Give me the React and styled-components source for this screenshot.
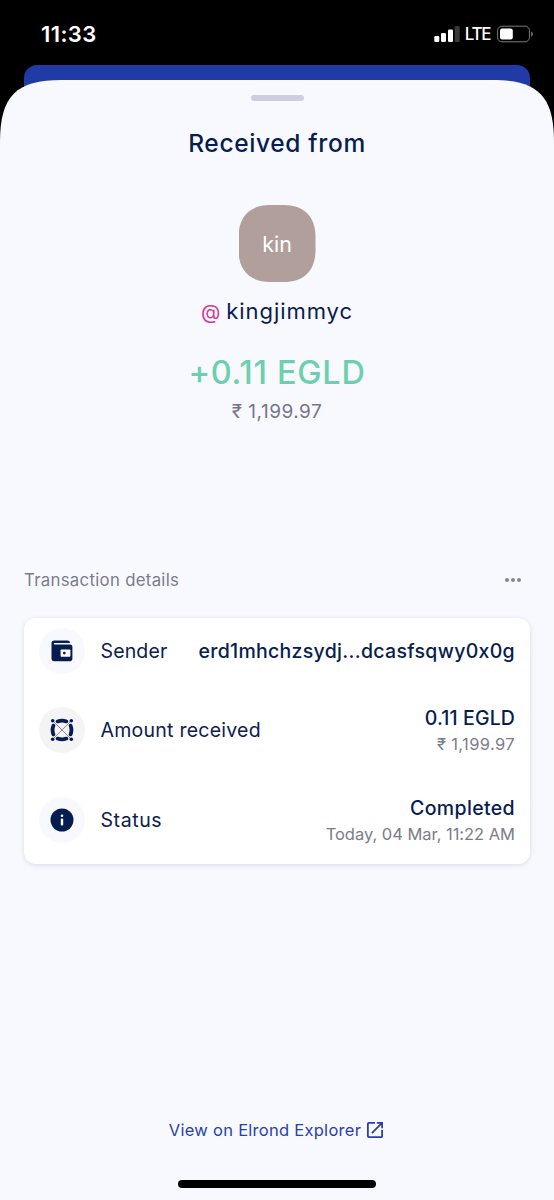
import React from 'react'
import styled, { createGlobalStyle } from "styled-components";

const GlobalStyle = createGlobalStyle`
    * {
        box-sizing: border-box;
    }
    body {
        margin: 0;
        background: #000000;
        font-family: 'Inter', 'Liberation Sans', sans-serif;
    }
`;

const details = [
    {
        icon: <WalletIcon />,
        label: "Sender",
        labelSpacing: 0.15,
        value: "erd1mhchzsydj...dcasfsqwy0x0g",
        height: 66,
        spacing: 0.3
    },
    {
        icon: <ElrondIcon />,
        circle: "#f4f4f5",
        label: "Amount received",
        labelSpacing: 0.25,
        value: "0.11 EGLD",
        note: "₹ 1,199.97",
        noteSpacing: 0.38,
        height: 91,
        spacing: 0.12
    },
    {
        icon: <InfoIcon />,
        label: "Status",
        labelSpacing: 0.6,
        value: "Completed",
        note: "Today, 04 Mar, 11:22 AM",
        noteSpacing: -0.03,
        height: 89,
        spacing: 0.36
    }
];

export default function App() {
    return (
        <>
            <GlobalStyle />
            <Screen>
                <StatusBar>
                    <Time>11:33</Time>
                    <SignalIcon />
                    <Network>LTE</Network>
                    <BatteryIcon />
                </StatusBar>
                <BackCard />
                <Sheet>
                    <Handle />
                    <Title>Received from</Title>
                    <Avatar>kin</Avatar>
                    <Username><At>@</At>kingjimmyc</Username>
                    <Amount>+0.11 EGLD</Amount>
                    <Fiat>₹ 1,199.97</Fiat>
                    <SectionHeader>
                        <SectionTitle>Transaction details</SectionTitle>
                        <More><Dot /><Dot /><Dot /></More>
                    </SectionHeader>
                    <Card>
                        {details.map((item) => (
                            <Row key={item.label} $height={item.height}>
                                <IconCircle $color={item.circle}>{item.icon}</IconCircle>
                                <Label $spacing={item.labelSpacing}>{item.label}</Label>
                                <Values $twoLines={!!item.note}>
                                    <Value $spacing={item.spacing}>{item.value}</Value>
                                    {item.note && <Note $spacing={item.noteSpacing}>{item.note}</Note>}
                                </Values>
                            </Row>
                        ))}
                    </Card>
                    <ExplorerLink>
                        View on Elrond Explorer
                        <OpenIcon />
                    </ExplorerLink>
                    <HomeIndicator />
                </Sheet>
            </Screen>
        </>
    )
}

function SignalIcon() {
    return (
        <svg width="26" height="16" viewBox="0 0 26 16" fill="#fff">
            <rect x="0.3" y="10" width="5" height="6" rx="1.3" />
            <rect x="7" y="7" width="5" height="9" rx="1.3" />
            <rect x="14" y="3.5" width="5" height="12.5" rx="1.3" />
            <rect x="20.7" y="0" width="5" height="16" rx="1.3" fill="#3a3a3a" />
        </svg>
    )
}

function BatteryIcon() {
    return (
        <svg width="37" height="18" viewBox="0 0 37 18">
            <rect x="0.6" y="1.2" width="31.8" height="15.6" rx="4.2" fill="none" stroke="#7c7c7c" strokeWidth="1" />
            <rect x="3" y="3.6" width="12.8" height="10.8" rx="2.2" fill="#fff" />
            <path d="M34.2 6.4 C36.3 7.4 36.3 10.6 34.2 11.6 Z" fill="#7c7c7c" />
        </svg>
    )
}

function WalletIcon() {
    return (
        <svg width="22" height="22" viewBox="0 0 22 22">
            <path d="M3.2 0.6 H16.5 C18.2 0.6 19 1.6 19 2.9 H3.4 C2.7 2.9 2.7 4.4 3.4 4.4 H19 C20.4 4.4 21.4 5.3 21.4 6.7 V18.8 C21.4 20.3 20.4 21.2 19 21.2 H3.2 C1.5 21.2 0.5 20.2 0.5 18.6 V3.2 C0.5 1.6 1.5 0.6 3.2 0.6 Z" fill="#071d4f" />
            <rect x="9.6" y="9.4" width="9.8" height="7.4" rx="0.8" fill="#fff" />
            <circle cx="13.3" cy="13.1" r="1.4" fill="#071d4f" />
        </svg>
    )
}

function ElrondIcon() {
    return (
        <svg width="24" height="24" viewBox="0 0 24 24" fill="none">
            <path d="M3.4 3.4 L20.6 20.6 M20.6 3.4 L3.4 20.6" stroke="#45454d" strokeWidth="0.6" />
            <g stroke="#071d4f" strokeWidth="3.8" strokeLinecap="round">
                <path d="M7.6 3.4 Q12 1.7 16.4 3.4" />
                <path d="M7.6 20.6 Q12 22.3 16.4 20.6" />
                <path d="M3.4 7.6 Q1.7 12 3.4 16.4" />
                <path d="M20.6 7.6 Q22.3 12 20.6 16.4" />
            </g>
            <g fill="#071d4f">
                <circle cx="2.7" cy="2.7" r="1.8" />
                <circle cx="21.3" cy="2.7" r="1.8" />
                <circle cx="2.7" cy="21.3" r="1.8" />
                <circle cx="21.3" cy="21.3" r="1.8" />
            </g>
        </svg>
    )
}

function InfoIcon() {
    return (
        <svg width="24" height="24" viewBox="0 0 24 24">
            <circle cx="12" cy="12" r="11.5" fill="#071d4f" />
            <circle cx="12" cy="7.8" r="1.3" fill="#fff" />
            <rect x="10.8" y="10.4" width="2.4" height="7.2" rx="1" fill="#fff" />
        </svg>
    )
}

function OpenIcon() {
    return (
        <svg width="16" height="16" viewBox="3 3 18 18" fill="#2a3fae">
            <path d="M19 19H5V5h7V3H5a2 2 0 0 0-2 2v14a2 2 0 0 0 2 2h14c1.1 0 2-.9 2-2v-7h-2v7zM14 3v2h3.59l-9.83 9.83 1.41 1.41L19 6.41V10h2V3h-7z" />
        </svg>
    )
}

const Screen = styled.div`
    width: 554px;
    height: 1200px;
    display: flex;
    flex-direction: column;
    background: #000000;
    overflow: hidden;
`;

const StatusBar = styled.div`
    height: 65px;
    padding: 3px 20px 0 41px;
    display: flex;
    align-items: center;
    flex-shrink: 0;
    color: #ffffff;
`;

const Time = styled.span`
    flex: 1;
    font-size: 22px;
    font-weight: 600;
    line-height: 26px;
    letter-spacing: 0.4px;
`;

const Network = styled.span`
    margin: 0 7px 0 5px;
    font-size: 17px;
    font-weight: 500;
    line-height: 20px;
    letter-spacing: -1.4px;
`;

const BackCard = styled.div`
    height: 50px;
    margin: 0 24px -35px;
    flex-shrink: 0;
    border-radius: 13px 13px 0 0;
    background: #213ba6;
`;

const Sheet = styled.main`
    flex: 1;
    display: flex;
    flex-direction: column;
    align-items: center;
    background: #f8f9ff;
    /* continuous corners, wider than a plain radius */
    clip-path: path("M0 62 C0 16 16 0 62 0 H492 C538 0 554 16 554 62 V1120 H0 Z");
`;

const Handle = styled.div`
    width: 53px;
    height: 6px;
    margin-top: 15px;
    border-radius: 3px;
    background: #cbcfdf;
`;

const Title = styled.h1`
    margin: 27px 0 0;
    font-size: 24.5px;
    font-weight: 500;
    line-height: 30px;
    letter-spacing: 0.65px;
    color: #071d4f;
`;

const Avatar = styled.div`
    width: 77px;
    height: 77px;
    margin-top: 47px;
    display: flex;
    align-items: center;
    justify-content: center;
    background: #b09f9a;
    clip-path: path("M0 32 C0 11.5 11.5 0 32 0 H45 C65.5 0 77 11.5 77 32 V45 C77 65.5 65.5 77 45 77 H32 C11.5 77 0 65.5 0 45 Z");
    color: #ffffff;
    font-size: 21.5px;
`;

const Username = styled.div`
    margin-top: 16px;
    font-size: 22px;
    line-height: 27px;
    letter-spacing: 0.95px;
    color: #071d4f;
`;

const At = styled.span`
    margin-right: 5px;
    font-size: 20px;
    color: #cf3a9c;
`;

const Amount = styled.div`
    margin-top: 27px;
    font-size: 32.5px;
    font-weight: 500;
    line-height: 40px;
    letter-spacing: 0.7px;
    color: #6ccfae;
`;

const Fiat = styled.div`
    margin-top: 7px;
    font-size: 19px;
    line-height: 24px;
    letter-spacing: 0.5px;
    color: #74758a;
`;

const SectionHeader = styled.div`
    width: 506px;
    margin-top: 146px;
    padding-right: 9px;
    display: flex;
    align-items: center;
    justify-content: space-between;
`;

const SectionTitle = styled.h2`
    margin: 0;
    font-size: 16.8px;
    font-weight: 400;
    line-height: 20px;
    letter-spacing: 0.29px;
    color: #7b7c8d;
`;

const More = styled.div`
    display: flex;
    gap: 2px;
`;

const Dot = styled.i`
    width: 4px;
    height: 4px;
    border-radius: 50%;
    background: #83869a;
`;

const Card = styled.section`
    width: 506px;
    margin-top: 28px;
    border-radius: 12px;
    background: #ffffff;
    box-shadow: 0 1px 5px rgba(30, 35, 70, 0.14);
`;

const Row = styled.div`
    height: ${(props) => props.$height}px;
    padding: 0 15px;
    display: flex;
    align-items: center;
`;

const IconCircle = styled.div`
    width: 46px;
    height: 46px;
    margin-right: 15.5px;
    display: flex;
    align-items: center;
    justify-content: center;
    border-radius: 50%;
    background: ${(props) => props.$color || "#f8f9ff"};
`;

const Label = styled.span`
    flex: 1;
    font-size: 19.5px;
    letter-spacing: ${(props) => props.$spacing}px;
    white-space: nowrap;
    color: #0b2050;
`;

const Values = styled.div`
    padding-top: ${(props) => (props.$twoLines ? 3 : 0)}px;
    display: flex;
    flex-direction: column;
    align-items: flex-end;
    white-space: nowrap;
`;

const Value = styled.strong`
    font-size: 19.5px;
    font-weight: 500;
    line-height: 26px;
    letter-spacing: ${(props) => props.$spacing}px;
    color: #071d4f;
`;

const Note = styled.span`
    font-size: 16.5px;
    line-height: 26px;
    letter-spacing: ${(props) => props.$spacing}px;
    color: #7b7c8a;
`;

const ExplorerLink = styled.a`
    margin-top: 256px;
    margin-right: 2px;
    display: flex;
    align-items: center;
    gap: 6px;
    font-size: 16.5px;
    line-height: 20px;
    letter-spacing: 0.27px;
    color: #2a3fae;
`;

const HomeIndicator = styled.div`
    width: 198px;
    height: 8px;
    margin-top: 40px;
    border-radius: 4px;
    background: #000000;
`;
